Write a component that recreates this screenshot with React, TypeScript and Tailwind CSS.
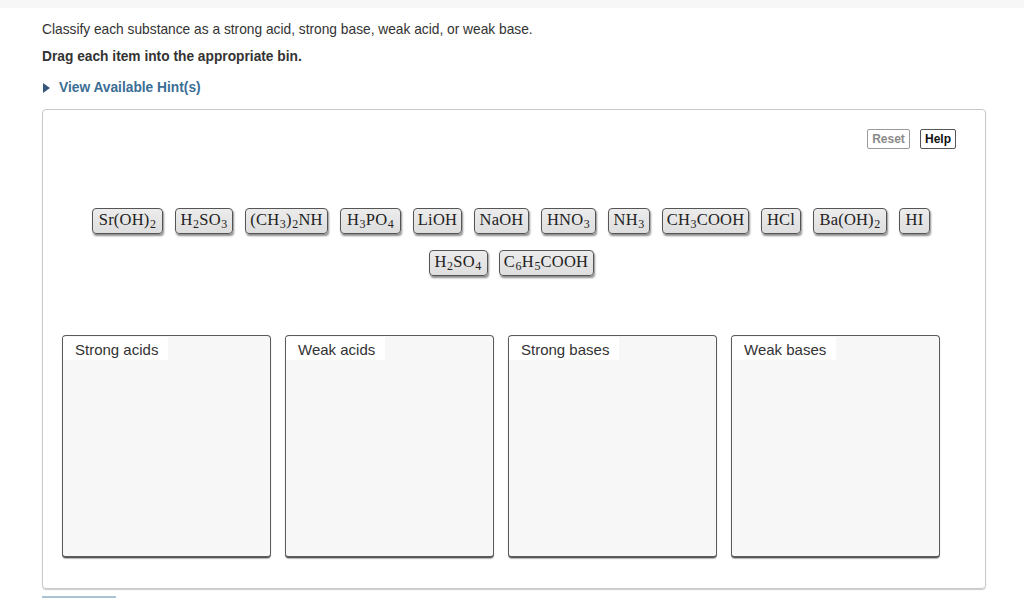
import React from "react";

type Part = string | { s: string };
const chipsRow1: { parts: Part[]; w: number }[] = [
  { parts: ["Sr(OH)", { s: "2" }], w: 71 },
  { parts: ["H", { s: "2" }, "SO", { s: "3" }], w: 58 },
  { parts: ["(CH", { s: "3" }, ")", { s: "2" }, "NH"], w: 83 },
  { parts: ["H", { s: "3" }, "PO", { s: "4" }], w: 61 },
  { parts: ["LiOH"], w: 49 },
  { parts: ["NaOH"], w: 55 },
  { parts: ["HNO", { s: "3" }], w: 55 },
  { parts: ["NH", { s: "3" }], w: 42 },
  { parts: ["CH", { s: "3" }, "COOH"], w: 87 },
  { parts: ["HCl"], w: 40 },
  { parts: ["Ba(OH)", { s: "2" }], w: 74 },
  { parts: ["HI"], w: 31 },
];
const chipsRow2: { parts: Part[]; w: number }[] = [
  { parts: ["H", { s: "2" }, "SO", { s: "4" }], w: 59 },
  { parts: ["C", { s: "6" }, "H", { s: "5" }, "COOH"], w: 95 },
];

function Chip({ parts, w }: { parts: Part[]; w: number }) {
  return (
    <div
      className="h-[26px] shrink-0 flex items-center justify-center rounded-[4px] border border-[#555] bg-gradient-to-b from-[#ececec] to-[#dedede] text-[16.5px] leading-none text-[#222] shadow-[1px_2px_2px_rgba(0,0,0,0.45)]"
      style={{ width: w, fontFamily: '"Liberation Serif", serif' }}
    >
      <span className="whitespace-nowrap tracking-[0.2px] -mt-[2px]">
        {parts.map((p, i) =>
          typeof p === "string" ? (
            <span key={i}>{p}</span>
          ) : (
            <span key={i} className="text-[12px] relative top-[3px] ml-[0.5px]">
              {p.s}
            </span>
          )
        )}
      </span>
    </div>
  );
}

function Bin({ label }: { label: string }) {
  return (
    <div className="w-[209px] h-[223px] shrink-0 rounded-[4px] border border-[#5a5a5a] border-b-2 bg-[#f7f7f7] shadow-[0_1px_1px_rgba(0,0,0,0.3)]">
      <div className="inline-block bg-white pl-[12px] pr-[10px] h-[23px] mt-px text-[15px] leading-[25px] text-[#333]">
        {label}
      </div>
    </div>
  );
}

export default function App() {
  return (
    <div
      className="w-[1024px] h-[600px] overflow-hidden bg-white text-[#333]"
      style={{ fontFamily: '"Liberation Sans", Arial, sans-serif' }}
    >
      <div className="h-[8px] bg-[#f7f7f7]" />
      <div className="pl-[42px] pr-[38px]">
        <p className="mt-[14px] text-[13.75px] leading-[16px]">
          Classify each substance as a strong acid, strong base, weak acid, or weak base.
        </p>
        <p className="mt-[11px] text-[13.75px] leading-[16px] font-bold">
          Drag each item into the appropriate bin.
        </p>
        <div className="mt-[15px] flex items-center h-[16px] text-[13.75px] font-bold text-[#3b6e95]">
          <svg width="7" height="10" viewBox="0 0 7 10" className="ml-[1px]">
            <path d="M0 0 L7 5 L0 10 Z" fill="#34577a" />
          </svg>
          <span className="ml-[9px]">View Available Hint(s)</span>
        </div>
        <div className="mt-[13px] h-[480px] rounded-[4px] border border-[#c9c9c9] shadow-[0_1px_1px_rgba(0,0,0,0.2)] flex flex-col">
          <div className="flex justify-end gap-[10px] pt-[19px] pr-[29px]">
            <div className="h-[20px] w-[43px] border border-[#9a9a9a] rounded-[2px] flex items-center justify-center text-[12px] font-bold text-[#8a8a8a]">
              Reset
            </div>
            <div className="h-[20px] w-[36px] border border-[#555] rounded-[2px] flex items-center justify-center text-[12px] font-bold text-[#111]">
              Help
            </div>
          </div>
          <div className="mt-[59px] flex justify-center gap-[12px] pr-[6px]">
            {chipsRow1.map((c, i) => (
              <Chip key={i} parts={c.parts} w={c.w} />
            ))}
          </div>
          <div className="mt-[16px] flex justify-center gap-[11px] pr-[6px]">
            {chipsRow2.map((c, i) => (
              <Chip key={i} parts={c.parts} w={c.w} />
            ))}
          </div>
          <div className="mt-[59px] pl-[19px] flex gap-[14px]">
            <Bin label="Strong acids" />
            <Bin label="Weak acids" />
            <Bin label="Strong bases" />
            <Bin label="Weak bases" />
          </div>
        </div>
        <div className="mt-[7px] w-[74px] h-[20px] border-t-2 border-[#aac3d5]" />
      </div>
    </div>
  );
}
